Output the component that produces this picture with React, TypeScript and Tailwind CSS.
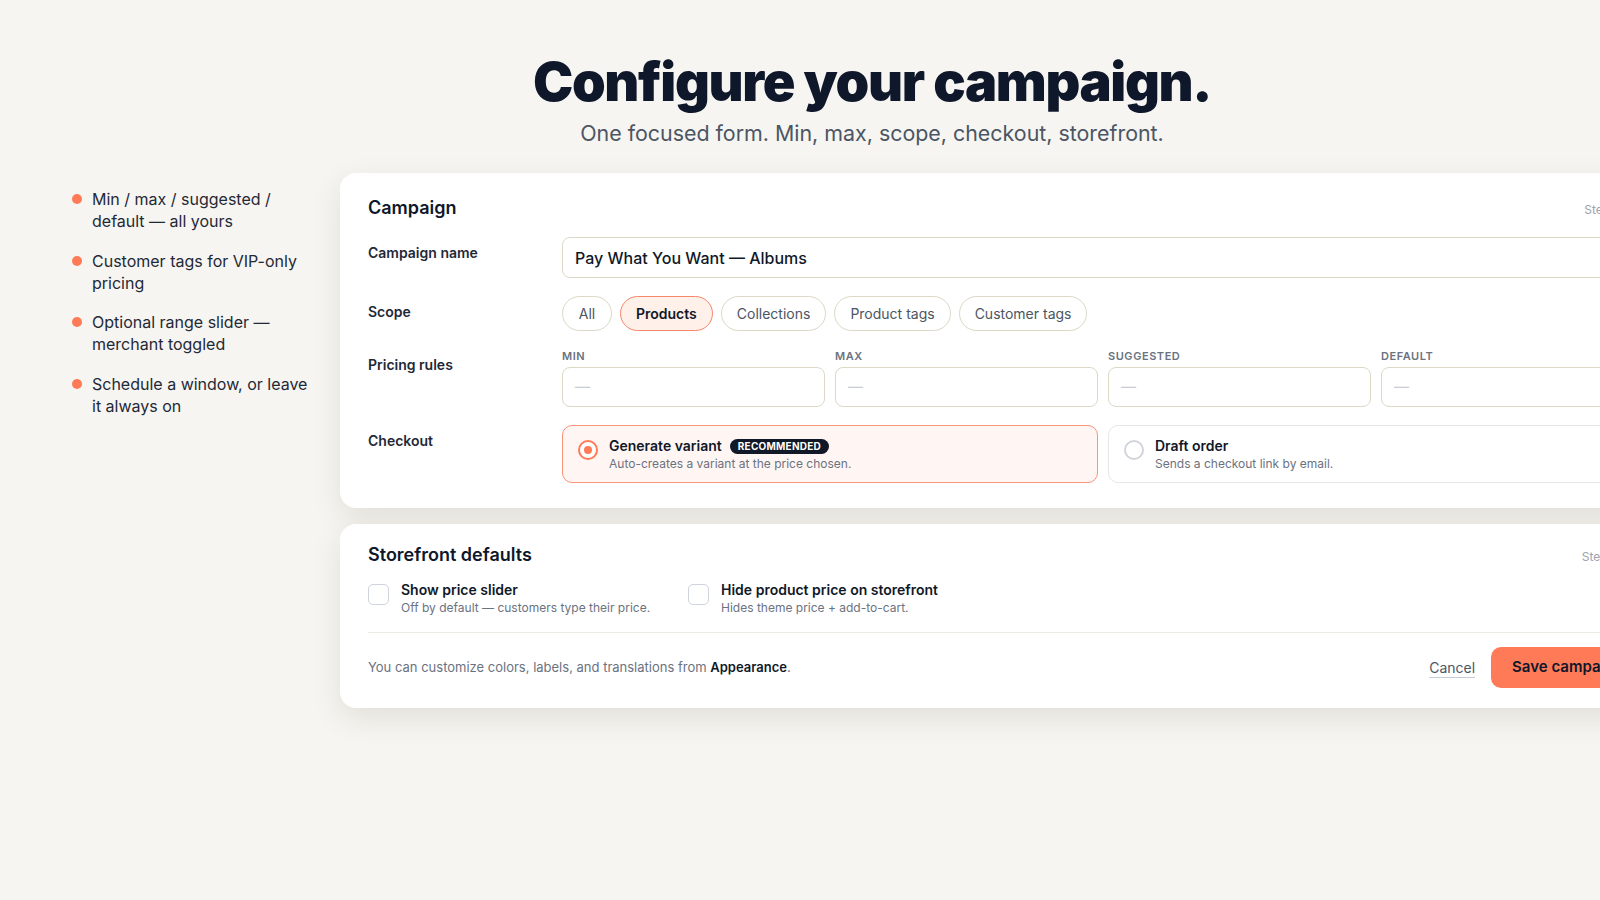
const features = [
  "Min / max / suggested / default — all yours",
  "Customer tags for VIP-only pricing",
  "Optional range slider — merchant toggled",
  "Schedule a window, or leave it always on",
];

const scopes = ["All", "Products", "Collections", "Product tags", "Customer tags"];
const rules = ["Min", "Max", "Suggested", "Default"];

function Label({ children }: { children: React.ReactNode }) {
  return <div className="pt-[6px] text-[14px] leading-[20px] font-semibold text-[#1f2937]">{children}</div>;
}

function Radio({ checked }: { checked: boolean }) {
  return (
    <span
      className={`mt-[3px] flex h-5 w-5 shrink-0 items-center justify-center rounded-full border-2 ${
        checked ? "border-[#ff7a57]" : "border-[#d1d5db]"
      } bg-white`}
    >
      {checked && <span className="h-2 w-2 rounded-full bg-[#ff7a57]" />}
    </span>
  );
}

function Checkbox() {
  return <span className="mt-[3px] h-[21px] w-[21px] shrink-0 rounded-[5px] border-[1.5px] border-[#cfd3dc] bg-white" />;
}

export default function App() {
  return (
    <div
      className="min-h-screen w-full overflow-hidden bg-[#f6f5f1] text-[#0f172a]"
      style={{ fontFamily: "Inter, 'Noto Sans', sans-serif" }}
    >
      <div className="ml-[72px] w-[1600px] pt-[55px]">
        {/* Header */}
        <div className="text-center">
          <h1 className="text-[54px] leading-[54px] font-black tracking-[-0.025em] text-[#0f172a]">
            Configure your campaign.
          </h1>
          <p className="mt-[10px] text-[21.4px] leading-[28px] text-[#4b5563]">
            One focused form. Min, max, scope, checkout, storefront.
          </p>
        </div>

        <div className="mt-[26px] flex gap-[28px]">
          {/* Feature list */}
          <ul className="flex w-[240px] shrink-0 flex-col gap-[17.5px] pt-[15px]">
            {features.map((f) => (
              <li key={f} className="flex gap-[10px]">
                <span className="mt-[6px] h-[10px] w-[10px] shrink-0 rounded-full bg-[#ff7a57]" />
                <span className="text-[16px] leading-[22px] text-[#1f2937]">{f}</span>
              </li>
            ))}
          </ul>

          <div className="flex flex-1 flex-col gap-4">
            {/* Campaign card */}
            <div className="rounded-2xl bg-white px-7 pt-[23px] pb-[25px] shadow-[0_10px_30px_rgba(40,35,20,0.10)]">
              <div className="flex items-baseline justify-between">
                <h2 className="text-[18px] leading-[24px] font-semibold text-[#0f172a]">Campaign</h2>
                <span className="text-[12px] text-[#9ca3af]">Step 1 of 2</span>
              </div>

              <div className="mt-[17px] grid grid-cols-[194px_1fr] gap-y-[18px]">
                <Label>Campaign name</Label>
                <div className="flex h-[41px] items-center rounded-lg border border-[#dcd7c6] px-[12px] text-[16px] font-medium text-[#111827]">
                  Pay What You Want — Albums
                </div>

                <Label>Scope</Label>
                <div className="flex gap-2">
                  {scopes.map((s) => (
                    <button
                      key={s}
                      className={`h-[35px] min-w-[50px] rounded-full border px-[15px] text-[14px] ${
                        s === "Products"
                          ? "border-[#f5876a] bg-[#fff0ea] font-semibold text-[#111827]"
                          : "border-[#dcd7c6] bg-white text-[#4b5563]"
                      }`}
                    >
                      {s}
                    </button>
                  ))}
                </div>

                <Label>Pricing rules</Label>
                <div className="grid grid-cols-4 gap-[10px]">
                  {rules.map((r) => (
                    <div key={r}>
                      <div className="text-[11px] leading-[14px] font-semibold tracking-wider text-[#6b7280] uppercase">{r}</div>
                      <div className="mt-1 flex h-[40px] items-center rounded-lg border border-[#dcd7c6] px-3 text-[15px] text-[#c8ccd4]">
                        —
                      </div>
                    </div>
                  ))}
                </div>

                <Label>Checkout</Label>
                <div className="grid grid-cols-2 gap-[10px]">
                  <div className="flex h-[58px] items-start gap-[11px] rounded-[10px] border border-[#f5957a] bg-[#fff6f3] px-[15px] pt-[11px]">
                    <Radio checked />
                    <div>
                      <div className="flex items-center gap-2">
                        <span className="text-[14px] leading-[18px] font-semibold text-[#111827]">Generate variant</span>
                        <span className="rounded-full bg-[#111827] px-2 py-[2px] text-[10px] leading-[11px] font-bold tracking-wide text-white">
                          RECOMMENDED
                        </span>
                      </div>
                      <div className="mt-[1px] text-[12px] leading-[16px] text-[#6b7280]">
                        Auto-creates a variant at the price chosen.
                      </div>
                    </div>
                  </div>
                  <div className="flex h-[58px] items-start gap-[11px] rounded-[10px] border border-[#e5e7eb] bg-white px-[15px] pt-[11px]">
                    <Radio checked={false} />
                    <div>
                      <div className="text-[14px] leading-[18px] font-semibold text-[#111827]">Draft order</div>
                      <div className="mt-[1px] text-[12px] leading-[16px] text-[#6b7280]">Sends a checkout link by email.</div>
                    </div>
                  </div>
                </div>
              </div>
            </div>

            {/* Storefront card */}
            <div className="rounded-2xl bg-white px-7 pt-[19px] pb-5 shadow-[0_10px_30px_rgba(40,35,20,0.10)]">
              <div className="flex items-baseline justify-between">
                <h2 className="text-[18px] leading-[24px] font-semibold text-[#0f172a]">Storefront defaults</h2>
                <span className="text-[12px] text-[#9ca3af]">Step 2 of 2</span>
              </div>

              <div className="mt-[14px] flex border-b border-[#ecebe6] pb-[16px]">
                <div className="flex w-[320px] gap-3">
                  <Checkbox />
                  <div>
                    <div className="text-[14px] leading-[18px] font-semibold text-[#111827]">Show price slider</div>
                    <div className="mt-[1px] text-[12px] leading-[16px] text-[#6b7280]">Off by default — customers type their price.</div>
                  </div>
                </div>
                <div className="flex gap-3">
                  <Checkbox />
                  <div>
                    <div className="text-[14px] leading-[18px] font-semibold text-[#111827]">Hide product price on storefront</div>
                    <div className="mt-[1px] text-[12px] leading-[16px] text-[#6b7280]">Hides theme price + add-to-cart.</div>
                  </div>
                </div>
              </div>

              <div className="mt-[14px] flex items-center justify-between">
                <p className="text-[13px] text-[#6b7280]">
                  You can customize colors, labels, and translations from{" "}
                  <span className="font-semibold text-[#111827]">Appearance</span>.
                </p>
                <div className="flex items-center gap-4">
                  <button className="text-[14px] text-[#4b5563] underline decoration-[#c7cbd3] underline-offset-4">Cancel</button>
                  <button className="h-[41px] rounded-[10px] bg-[#ff7a57] px-[21px] text-[15px] font-semibold text-[#0f172a]">
                    Save campaign
                  </button>
                </div>
              </div>
            </div>
          </div>
        </div>
      </div>
    </div>
  );
}
